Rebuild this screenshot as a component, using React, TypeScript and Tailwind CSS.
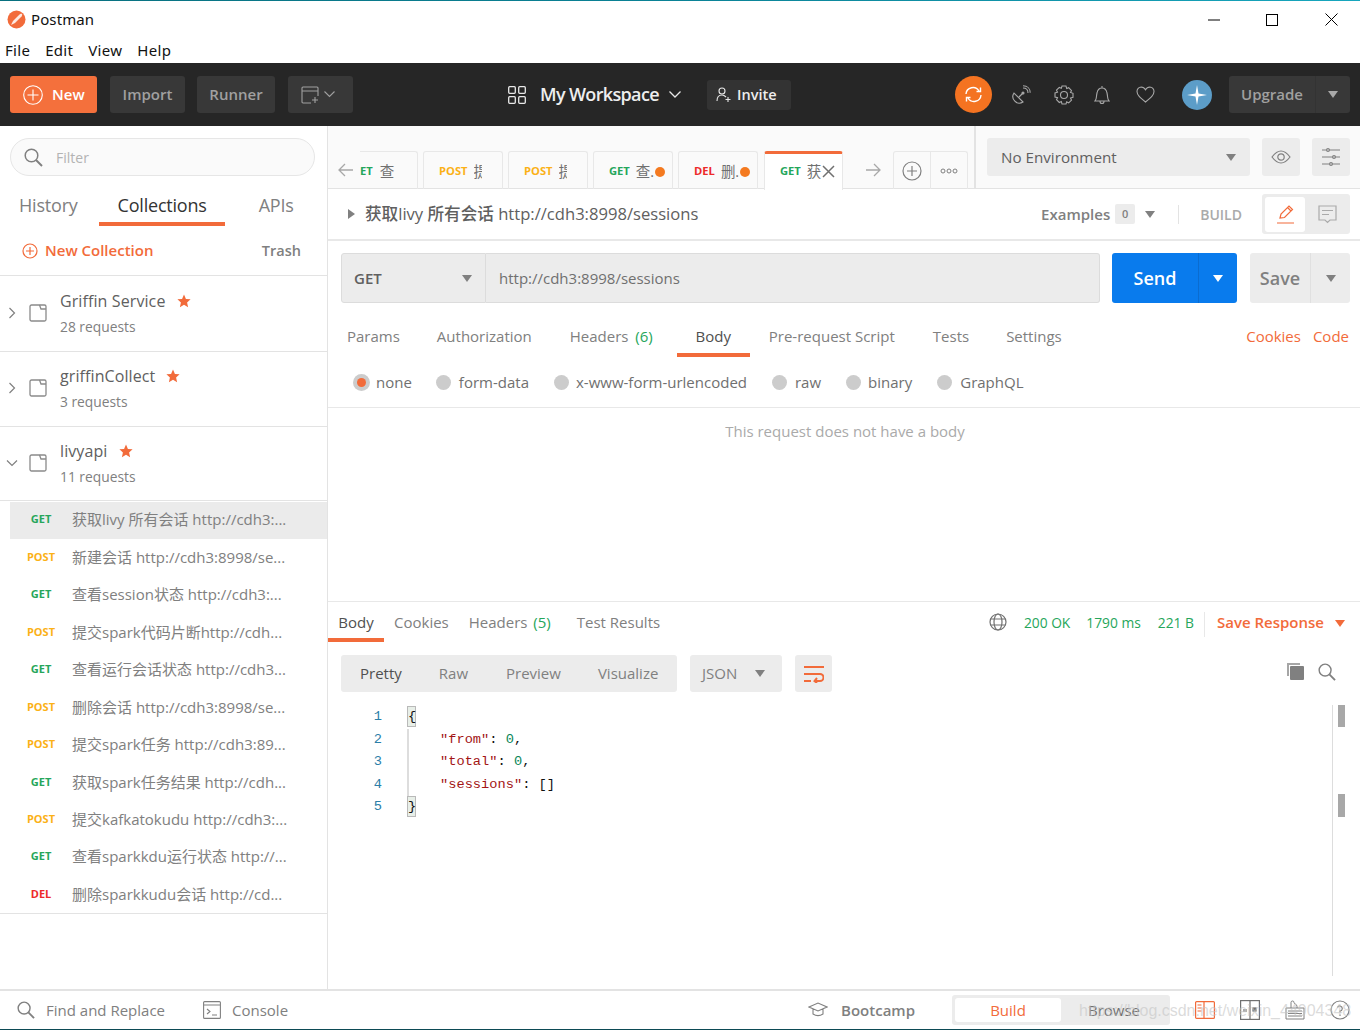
import React from "react";

const font = { fontFamily: '"Open Sans","Noto Sans CJK SC",sans-serif' };

const Tri = ({ c = "#808080", w = 10 }: { c?: string; w?: number }) => (
  <svg width={w} height={w * 0.7} viewBox="0 0 10 7" className="shrink-0"><path d="M0 0h10L5 7z" fill={c} /></svg>
);

const Folder = () => (
  <svg width="18" height="18" viewBox="0 0 18 18" fill="none" stroke="#8a8a8a" strokeWidth="1.3" className="shrink-0">
    <rect x="1" y="1" width="16" height="16" rx="1.5" />
    <path d="M10.500 1l1.500 4h5" />
  </svg>
);

const Chev = ({ down }: { down?: boolean }) => (
  <svg width="12" height="12" viewBox="0 0 12 12" fill="none" stroke="#808080" strokeWidth="1.2" className="shrink-0">
    {down ? <path d="M1 3.5l5 5 5-5" /> : <path d="M3.5 1l5 5-5 5" />}
  </svg>
);

const Star = () => (
  <svg width="14" height="14" viewBox="0 0 24 24" fill="#f26b3a" className="shrink-0">
    <path d="M12 1l3.3 7.4 8 .8-6 5.4 1.7 7.9L12 18.4l-7 4.1 1.7-7.9-6-5.4 8-.8z" />
  </svg>
);

const Search = ({ s = 19 }: { s?: number }) => (
  <svg width={s} height={s} viewBox="0 0 19 19" fill="none" stroke="#808080" strokeWidth="1.5" className="shrink-0">
    <circle cx="7.5" cy="7.5" r="6.3" /><path d="M12 12l6 6" strokeWidth="2" />
  </svg>
);

const collections = [
  { name: "Griffin Service", count: "28 requests", h: "h-[76px]", gap: "ml-[12px]", down: false, nudge: "" },
  { name: "griffinCollect", count: "3 requests", h: "h-[75px]", gap: "ml-[11px]", down: false, nudge: "mt-[-1px]" },
  { name: "livyapi", count: "11 requests", h: "h-[74px]", gap: "ml-[11px]", down: true, nudge: "" },
];

const reqs: [string, string][] = [
  ["GET", "获取livy 所有会话 http://cdh3:..."],
  ["POST", "新建会话 http://cdh3:8998/se..."],
  ["GET", "查看session状态 http://cdh3:..."],
  ["POST", "提交spark代码片断http://cdh..."],
  ["GET", "查看运行会话状态 http://cdh3..."],
  ["POST", "删除会话 http://cdh3:8998/se..."],
  ["POST", "提交spark任务 http://cdh3:89..."],
  ["GET", "获取spark任务结果 http://cdh..."],
  ["POST", "提交kafkatokudu http://cdh3:..."],
  ["GET", "查看sparkkdu运行状态 http://..."],
  ["DEL", "删除sparkkudu会话 http://cd..."],
];

const mColor = (m: string) => (m === "GET" ? "text-[#26a65b]" : m === "POST" ? "text-[#fbb117]" : "text-[#ed2a2a]");

function Sidebar() {
  return (
    <div className="w-[328px] shrink-0 border-r border-[#e3e3e3] flex flex-col bg-white">
      <div className="mt-[12px] ml-[10px] w-[305px] h-[38px] rounded-full border border-[#e6e6e6] bg-[#fafafa] flex items-center pl-[13px]">
        <Search />
        <span className="ml-[13px] text-[14px] text-[#b3b3b3]">Filter</span>
      </div>
      <div className="h-[50px] flex relative text-[18px] text-[#808080] tracking-[-0.2px]">
        <span className="ml-[19px] mt-[16px]">History</span>
        <div className="ml-[21px] w-[126px] h-[50px] border-b-4 border-[#f26b3a] text-center pt-[16px] pl-[1px] text-[#333]">Collections</div>
        <span className="ml-[34px] mt-[16px]">APIs</span>
      </div>
      <div className="h-[50px] shrink-0 flex items-center border-b border-[#e3e3e3] pl-[22px] pr-[26px]">
        <svg width="16" height="16" viewBox="0 0 16 16" fill="none" stroke="#f26b3a" strokeWidth="1.2"><circle cx="8" cy="8" r="7" /><path d="M8 4v8M4 8h8" /></svg>
        <span className="ml-[7px] text-[15px] font-semibold text-[#f26b3a]">New Collection</span>
        <span className="ml-auto text-[14.5px] font-semibold text-[#808080]">Trash</span>
      </div>
      {collections.map((c) => (
        <div key={c.name} className={`${c.h} shrink-0 flex items-center border-b border-[#e3e3e3] pl-[6px]`}>
          <span className="mb-[2px]"><Chev down={c.down} /></span>
          <span className="ml-[11px] mb-[2px]"><Folder /></span>
          <div className="ml-[13px] flex flex-col">
            <div className={`${c.nudge} flex items-center h-[24px] text-[16px] tracking-[0.1px] text-[#606060]`}>
              {c.name}
              <span className={c.gap}><Star /></span>
            </div>
            <div className="text-[13.8px] text-[#808080] mt-[4px] h-[21px]">{c.count}</div>
          </div>
        </div>
      ))}
      <div className="mt-[0.5px] border-b border-[#e3e3e3] flex flex-col">
        {reqs.map(([m, t], i) => (
          <div key={i} className={`h-[37.45px] flex items-center pb-[1px] ml-[10px] ${i === 0 ? "bg-[#ebebeb]" : ""}`}>
            <span className={`w-[62px] shrink-0 text-center text-[11px] font-bold ${mColor(m)}`}>{m}</span>
            <span className="text-[15px] text-[#808080] whitespace-nowrap">{t}</span>
          </div>
        ))}
      </div>
    </div>
  );
}

function Tab({ m, t, dot, w, active, clip }: { m: string; t: string; dot?: boolean; w: string; active?: boolean; clip?: string }) {
  return (
    <div className={`${w} shrink-0 h-full flex items-center rounded-t-[3px] border-x border-[#e8e8e8] ${active ? "bg-white border-t-[3px] border-t-[#f26b3a] pb-[1px]" : "border-t pt-[2px]"}`}>
      <span className={`text-[11.2px] font-bold ml-[15px] ${mColor(m)}`}>{m}</span>
      <span className={`${clip} ml-[6px] overflow-hidden whitespace-nowrap text-[14.5px] text-[#707070]`}>{t}</span>
      {dot && <span className="w-[10px] h-[10px] rounded-full bg-[#f47a20] shrink-0" />}
      {active && (
        <svg width="13" height="13" viewBox="0 0 13 13" stroke="#707070" strokeWidth="1.5" className="shrink-0"><path d="M1 1l11 11M12 1L1 12" /></svg>
      )}
    </div>
  );
}

function TabBar() {
  return (
    <div className="h-[63px] shrink-0 bg-[#fafafa] flex border-b border-[#e3e3e3]">
      <div className="w-[646px] shrink-0 mt-[25px] h-[38px] flex items-center relative">
        <svg width="16" height="14" viewBox="0 0 16 14" fill="none" stroke="#a8a8a8" strokeWidth="1.3" className="ml-[10px] shrink-0"><path d="M15 7H1M7 1L1 7l6 6" /></svg>
        <div className="w-[58px] shrink-0 ml-[6px] h-full flex items-center pt-[2px] border-r border-t border-[#e8e8e8] rounded-tr-[3px] overflow-hidden">
          <span className="ml-[-8px] text-[11.2px] font-bold text-[#26a65b] whitespace-nowrap">GET</span>
          <span className="ml-[7px] text-[14.5px] text-[#707070]">查</span>
        </div>
        <div className="flex h-full gap-[5px] ml-[5px]">
          <Tab w="w-[80px]" m="POST" t="提" clip="w-[8px]" />
          <Tab w="w-[80px]" m="POST" t="提" clip="w-[8px]" />
          <Tab w="w-[80px]" m="GET" t="查.." clip="w-[19px]" dot />
          <Tab w="w-[80px]" m="DEL" t="删.." clip="w-[19px]" dot />
        </div>
        <div className="ml-[6px] h-[39px] mb-[-1px] flex">
          <Tab w="w-[79px]" m="GET" t="获" clip="w-[15px]" active />
        </div>
        <svg width="16" height="14" viewBox="0 0 16 14" fill="none" stroke="#a8a8a8" strokeWidth="1.3" className="ml-[22px] shrink-0"><path d="M1 7h14M9 1l6 6-6 6" /></svg>
        <div className="ml-[12px] h-full w-[38px] shrink-0 flex items-center justify-center border-x border-t border-[#e8e8e8] rounded-tl-[3px]">
          <svg width="20" height="20" viewBox="0 0 20 20" fill="none" stroke="#808080" strokeWidth="1.2"><circle cx="10" cy="10" r="9" /><path d="M10 5v10M5 10h10" /></svg>
        </div>
        <div className="h-full w-[37px] shrink-0 flex items-center justify-center border-r border-t border-[#e8e8e8] rounded-tr-[3px]">
          <svg width="18" height="6" viewBox="0 0 18 6" fill="none" stroke="#808080" strokeWidth="1"><circle cx="3" cy="3" r="2" /><circle cx="9" cy="3" r="2" /><circle cx="15" cy="3" r="2" /></svg>
        </div>
      </div>
      <div className="w-[386px] h-[62px] border-l-2 border-[#e3e3e3] flex items-start pt-[12px] pl-[11px]">
        <div className="w-[263px] h-[38px] bg-[#ececec] rounded-[3px] flex items-center pl-[14px] pr-[14px] text-[15.2px] font-medium text-[#606060]">
          No Environment
          <span className="ml-auto"><Tri /></span>
        </div>
        <div className="ml-[12px] w-[38px] h-[38px] bg-[#ececec] rounded-[3px] flex items-center justify-center">
          <svg width="20" height="14" viewBox="0 0 20 14" fill="none" stroke="#808080" strokeWidth="1.2"><path d="M1 7c3-4 6-6 9-6s6 2 9 6c-3 4-6 6-9 6s-6-2-9-6z" /><circle cx="10" cy="7" r="3.2" /></svg>
        </div>
        <div className="ml-[12px] w-[38px] h-[38px] bg-[#ececec] rounded-[3px] flex items-center justify-center">
          <svg width="18" height="18" viewBox="0 0 18 18" fill="none" stroke="#808080" strokeWidth="1.2"><path d="M0 2h18M0 9h18M0 16h18" /><circle cx="6" cy="2" r="1.4" fill="#ececec" /><circle cx="12" cy="9" r="1.4" fill="#ececec" /><circle cx="9" cy="16" r="1.4" fill="#ececec" /></svg>
        </div>
      </div>
    </div>
  );
}

function TitleRow() {
  return (
    <div className="h-[52px] shrink-0 flex items-center border-b-2 border-[#e8e8e8] pl-[20px] pr-[10px]">
      <svg width="7" height="10" viewBox="0 0 7 10" className="shrink-0"><path d="M0 0l7 5-7 5z" fill="#808080" /></svg>
      <span className="ml-[10px] text-[16.6px] font-medium text-[#606060]">获取livy 所有会话 http://cdh3:8998/sessions</span>
      <span className="ml-auto text-[15px] font-semibold text-[#808080]">Examples</span>
      <span className="ml-[5px] w-[20px] h-[20px] bg-[#ececec] rounded-[2px] text-[11px] font-semibold text-[#808080] flex items-center justify-center">0</span>
      <span className="ml-[10px]"><Tri /></span>
      <span className="ml-[23px] w-px h-[19px] bg-[#e3e3e3]" />
      <span className="ml-[21px] text-[14px] font-semibold text-[#aaa]">BUILD</span>
      <div className="ml-[20px] w-[88px] h-[40px] bg-[#ececec] rounded-[3px] flex items-center pl-[3px]">
        <div className="w-[40px] h-[35px] bg-white rounded-[3px] flex items-center justify-center">
          <svg width="19" height="19" viewBox="0 0 19 19" fill="none" stroke="#f26b3a" strokeWidth="1.2"><path d="M4 13l1-4L13 1l3.5 3.5-8 8zM11.5 2.5L15 6M1 18h17" /></svg>
        </div>
        <div className="w-[45px] flex justify-center">
          <svg width="19" height="19" viewBox="0 0 19 19" fill="none" stroke="#aaa" strokeWidth="1.2"><path d="M1 1h17v14h-6l-2.5 2.5L7 15H1zM4 5.500h11M4 9.500h7" /></svg>
        </div>
      </div>
    </div>
  );
}

function UrlRow() {
  return (
    <div className="mt-[12px] h-[50px] shrink-0 flex pl-[13px]">
      <div className="w-[145px] bg-[#ececec] border border-[#dcdcdc] rounded-l-[3px] flex items-center pl-[12px] pr-[13px] text-[15px] font-semibold text-[#606060]">
        GET
        <span className="ml-auto"><Tri /></span>
      </div>
      <div className="w-[614px] bg-[#ececec] border border-l-0 border-[#dcdcdc] rounded-r-[3px] flex items-center pl-[13px] text-[15px] text-[#707070]">
        http://cdh3:8998/sessions
      </div>
      <div className="ml-[12px] w-[125px] bg-[#097bed] rounded-[3px] flex text-white text-[18px] font-semibold">
        <span className="w-[87px] flex items-center justify-center border-r border-[#0a6cd0]">Send</span>
        <span className="flex-1 flex items-center justify-center"><Tri c="#fff" /></span>
      </div>
      <div className="ml-[13px] w-[100px] bg-[#ececec] rounded-[3px] flex text-[#808080] text-[18px] font-semibold">
        <span className="w-[61px] flex items-center justify-center border-r border-[#e0e0e0]">Save</span>
        <span className="flex-1 flex items-center justify-center"><Tri /></span>
      </div>
    </div>
  );
}

function ReqTabs() {
  return (
    <div className="h-[54px] shrink-0 flex items-start text-[15px] text-[#808080] pl-[19px] pr-[11px] whitespace-nowrap">
      <span className="mt-[22px]">Params</span>
      <span className="mt-[22px] ml-[37px]">Authorization</span>
      <span className="mt-[22px] ml-[38px]">Headers <span className="ml-[3px] text-[#26a65b]">(6)</span></span>
      <div className="ml-[24px] mt-[17px] w-[73px] h-[37px] border-b-4 border-[#f26b3a] text-center pt-[5px] text-[#505050]">Body</div>
      <span className="mt-[22px] ml-[19px]">Pre-request Script</span>
      <span className="mt-[22px] ml-[38px]">Tests</span>
      <span className="mt-[22px] ml-[37px]">Settings</span>
      <span className="mt-[22px] ml-auto text-[#f26b3a]">Cookies</span>
      <span className="mt-[22px] ml-[12px] text-[#f26b3a]">Code</span>
    </div>
  );
}

function Radios() {
  const items: [string, string, string][] = [
    ["form-data", "ml-[24px]", "ml-[8px]"],
    ["x-www-form-urlencoded", "ml-[25px]", "ml-[7px]"],
    ["raw", "ml-[25px]", "ml-[8px]"],
    ["binary", "ml-[25px]", "ml-[7px]"],
    ["GraphQL", "ml-[25px]", "ml-[8px]"],
  ];
  return (
    <div className="h-[51px] shrink-0 flex items-center border-b border-[#e8e8e8] pl-[25px] text-[15px] text-[#707070] whitespace-nowrap">
      <span className="w-[17px] h-[17px] rounded-full bg-[#ccc] flex items-center justify-center">
        <span className="w-[9px] h-[9px] rounded-full bg-[#f26b3a]" />
      </span>
      <span className="ml-[6px]">none</span>
      {items.map(([t, m, g]) => (
        <React.Fragment key={t}>
          <span className={`${m} w-[15px] h-[15px] rounded-full bg-[#ccc]`} />
          <span className={g}>{t}</span>
        </React.Fragment>
      ))}
    </div>
  );
}

function Response() {
  return (
    <div className="flex-1 flex flex-col border-t border-[#e8e8e8] min-h-0">
      <div className="h-[40px] shrink-0 flex items-start text-[15px] text-[#808080] pr-[15px] whitespace-nowrap">
        <div className="w-[56px] h-[40px] border-b-4 border-[#f26b3a] text-center pt-[9px] text-[#505050]">Body</div>
        <span className="ml-[10px] mt-[9px]">Cookies</span>
        <span className="ml-[20px] mt-[9px]">Headers <span className="ml-[2px] text-[#26a65b]">(5)</span></span>
        <span className="ml-[26px] mt-[9px]">Test Results</span>
        <svg width="18" height="18" viewBox="0 0 18 18" fill="none" stroke="#707070" strokeWidth="1.2" className="ml-auto mt-[11px]"><circle cx="9" cy="9" r="8" /><ellipse cx="9" cy="9" rx="4" ry="8" /><path d="M1.500 6h15M1.500 12h15" /></svg>
        <span className="ml-[17px] mt-[11px] text-[13.8px] text-[#26a65b]">200 OK</span>
        <span className="ml-[16px] mt-[11px] text-[13.8px] text-[#26a65b]">1790 ms</span>
        <span className="ml-[17px] mt-[11px] text-[13.8px] text-[#26a65b]">221 B</span>
        <span className="ml-[10px] mt-[10px] w-px h-[25px] bg-[#e8e8e8]" />
        <span className="ml-[12px] mt-[9px] text-[#f26b3a] font-semibold">Save Response</span>
        <span className="ml-[11px] mt-[18px]"><Tri c="#f26b3a" /></span>
      </div>
      <div className="mt-[13px] h-[37px] flex items-center pl-[13px] pr-[24px] text-[15px] text-[#808080] shrink-0">
        <div className="w-[336px] h-full bg-[#ececec] rounded-[3px] flex items-center">
          <span className="ml-[19px] text-[#505050]">Pretty</span>
          <span className="ml-[37px]">Raw</span>
          <span className="ml-[38px]">Preview</span>
          <span className="ml-[37px]">Visualize</span>
        </div>
        <div className="ml-[13px] w-[92px] h-full bg-[#ececec] rounded-[3px] flex items-center pl-[12px] pr-[17px]">
          JSON
          <span className="ml-auto"><Tri /></span>
        </div>
        <div className="ml-[13px] w-[37px] h-full bg-[#ececec] rounded-[3px] flex items-center justify-center">
          <svg width="20" height="18" viewBox="0 0 20 18" fill="none" stroke="#f26b3a" strokeWidth="2"><path d="M0 2h20M0 9h16a3.500 3.500 0 0 1 0 7h-5M13 13l-2.500 3 2.500 2M0 16h7" /></svg>
        </div>
        <svg width="19" height="19" viewBox="0 0 19 19" className="ml-auto mb-[4px] shrink-0" fill="#808080"><path d="M1 1h13v2H3v11H1z" opacity=".7" /><rect x="4" y="4" width="14" height="14" rx="1" /></svg>
        <span className="ml-[13px] mb-[4px]"><Search s={18} /></span>
      </div>
      <div className="mt-[14px] flex-1 flex min-h-0 relative">
        <div className="w-[54px] shrink-0 text-right text-[13.7px] text-[#2b7ea8] leading-[22.5px] pt-0" style={{ fontFamily: '"Liberation Mono",monospace' }}>
          {[1, 2, 3, 4, 5].map((n) => <div key={n}>{n}</div>)}
        </div>
        <div className="ml-[25px] text-[13.7px] leading-[22.5px] whitespace-pre text-[#111] relative" style={{ fontFamily: '"Liberation Mono",monospace' }}>
          <div><span className="inline-block w-[9px] h-[21px] leading-[20px] bg-[#e8efe8] border border-[#b9b9b9]">{"{"}</span></div>
          <div className="border-l-2 border-[#ddd] pl-[31px]"><span className="text-[#a31515]">"from"</span>: <span className="text-[#098658]">0</span>,</div>
          <div className="border-l-2 border-[#ddd] pl-[31px]"><span className="text-[#a31515]">"total"</span>: <span className="text-[#098658]">0</span>,</div>
          <div className="border-l-2 border-[#ddd] pl-[31px]"><span className="text-[#a31515]">"sessions"</span>: []</div>
          <div><span className="inline-block w-[9px] h-[21px] leading-[20px] bg-[#e8efe8] border border-[#b9b9b9]">{"}"}</span></div>
        </div>
        <div className="ml-auto mr-[15px] w-[13px] mt-[-1px] mb-[13px] border-l border-[#ddd] flex flex-col items-end">
          <div className="w-[7px] h-[22px] bg-[#a8a8a8] shrink-0" />
          <div className="w-[7px] h-[23px] bg-[#a8a8a8] mt-[67px] shrink-0" />
        </div>
      </div>
    </div>
  );
}

function BottomBar() {
  return (
    <div className="h-[41px] shrink-0 border-t-2 border-[#e3e3e3] border-b border-b-[#0c4a55] flex items-center pl-[17px] pr-[10px] text-[15px] text-[#808080] relative whitespace-nowrap">
      <Search s={18} />
      <span className="ml-[11px]">Find and Replace</span>
      <svg width="18" height="18" viewBox="0 0 18 18" fill="none" stroke="#808080" strokeWidth="1.1" className="ml-[38px] shrink-0"><rect x=".6" y=".6" width="16.800" height="16.800" rx="1" /><path d="M1 4h16M4 8l3 2.500-3 2.500M9 14h5" /></svg>
      <span className="ml-[11px]">Console</span>
      <svg width="20" height="16" viewBox="0 0 20 16" fill="none" stroke="#808080" strokeWidth="1.1" className="ml-[520px] shrink-0"><path d="M1 5l9-4 9 4-9 4zM5 7v5c3 2 7 2 10 0V7" /></svg>
      <span className="ml-[13px] font-semibold">Bootcamp</span>
      <div className="ml-[37px] w-[218px] h-[30px] shrink-0 bg-[#ececec] rounded-[3px] flex items-center pl-[3px]">
        <div className="w-[106px] h-[24px] bg-white rounded-[3px] flex items-center justify-center text-[#f26b3a]">Build</div>
        <span className="ml-[27px] text-[#707070]">Browse</span>
      </div>
      <svg width="20" height="18" viewBox="0 0 20 18" fill="none" stroke="#f26b3a" strokeWidth="1.2" className="ml-[25px] shrink-0"><rect x=".6" y=".6" width="18.800" height="16.800" rx="1" /><path d="M9 1v16M2.500 4h4M2.500 7h4M2.500 10h4" /></svg>
      <svg width="20" height="20" viewBox="0 0 20 20" fill="none" stroke="#707070" strokeWidth="1.2" className="ml-[25px] shrink-0"><rect x=".6" y=".6" width="18.800" height="18.800" /><path d="M10 1v18M4 9v3M6 9v3" /><rect x="13" y="8" width="3" height="3" fill="#707070" /></svg>
      <svg width="20" height="20" viewBox="0 0 20 20" fill="none" stroke="#808080" strokeWidth="1" className="ml-[25px] shrink-0"><path d="M6 8V2.500a1.500 1.500 0 0 1 3 0c0 2 3 1 3 4V8M1 8h18v11H1zM3 11h14M3 13.500h14M3 16h14" /></svg>
      <svg width="20" height="20" viewBox="0 0 20 20" fill="none" stroke="#808080" strokeWidth="1.2" className="ml-[25px] shrink-0"><circle cx="10" cy="10" r="9" /><path d="M7.500 7.500A2.500 2.500 0 1 1 10 11v1.500M10 14.500v1.500" /></svg>
      <span className="absolute left-[1079px] top-[8px] text-[16px] whitespace-nowrap text-[#c4c4c4]/60" style={{ fontFamily: '"Liberation Sans",sans-serif' }}>https://blog.csdn.net/weixin_44904348</span>
    </div>
  );
}

export default function App() {
  return (
    <div className="w-[1360px] h-[1030px] flex flex-col bg-white overflow-hidden" style={font}>
      <div className="h-[1px] shrink-0 bg-gradient-to-r from-[#08707f] via-[#0a8296] to-[#17a6bd]" />
      <div className="h-[37px] shrink-0 flex items-center pl-[7px] pr-[22px] text-[#111]" style={{ fontFamily: '"Noto Sans",sans-serif' }}>
        <svg width="19" height="19" viewBox="0 0 19 19" className="shrink-0">
          <circle cx="9.500" cy="9.500" r="9" fill="#f26b3a" />
          <path d="M4 15l2-4 6-6c1-1 2.500-1.500 3-1s0 2-1 3l-6 6z" fill="#fff" opacity=".85" />
        </svg>
        <span className="ml-[5px] text-[15px] tracking-[0.1px]">Postman</span>
        <svg width="12" height="2" viewBox="0 0 12 2" className="ml-auto"><path d="M0 1h12" stroke="#000" /></svg>
        <svg width="12" height="12" viewBox="0 0 12 12" fill="none" stroke="#000" className="ml-[46px]"><rect x=".5" y=".5" width="11" height="11" /></svg>
        <svg width="13" height="13" viewBox="0 0 13 13" stroke="#000" className="ml-[47px]"><path d="M.5.5l12 12M12.500.5l-12 12" /></svg>
      </div>
      <div className="h-[25px] shrink-0 flex items-center pl-[5px] text-[15px] tracking-[0.3px] text-[#111] gap-[15px]" style={{ fontFamily: '"Noto Sans",sans-serif' }}>
        <span>File</span><span>Edit</span><span>View</span><span>Help</span>
      </div>
      <div className="h-[63px] shrink-0 bg-[#262626] flex items-center pl-[10px] pr-[10px] text-[15px] font-semibold text-[#a0a0a0] whitespace-nowrap">
        <div className="w-[87px] shrink-0 h-[37px] bg-[#f4703c] rounded-[3px] flex items-center pl-[13px] text-white">
          <svg width="20" height="20" viewBox="0 0 20 20" fill="none" stroke="#fff" strokeWidth="1.1"><circle cx="10" cy="10" r="9.300" /><path d="M10 4.500v11M4.500 10h11" /></svg>
          <span className="ml-[9px]">New</span>
        </div>
        <div className="ml-[13px] w-[75px] shrink-0 h-[37px] bg-[#383838] rounded-[3px] flex items-center justify-center">Import</div>
        <div className="ml-[12px] w-[78px] shrink-0 h-[37px] bg-[#383838] rounded-[3px] flex items-center justify-center">Runner</div>
        <div className="ml-[13px] w-[65px] shrink-0 h-[37px] bg-[#383838] rounded-[3px] flex items-center pl-[13px]">
          <svg width="19" height="18" viewBox="0 0 19 18" fill="none" stroke="#a0a0a0" strokeWidth="1.1"><path d="M10 17H2a1 1 0 0 1-1-1V2a1 1 0 0 1 1-1h14a1 1 0 0 1 1 1v8M1 5h16M14 11v6M11 14h6" /></svg>
          <svg width="11" height="7" viewBox="0 0 11 7" fill="none" stroke="#a0a0a0" strokeWidth="1.100" className="ml-[4px]"><path d="M.5.500l5 5 5-5" /></svg>
        </div>
        <svg width="18" height="18" viewBox="0 0 18 18" fill="none" stroke="#e8e8e8" strokeWidth="1.3" className="ml-[155px] shrink-0"><rect x=".7" y=".7" width="6.600" height="6.600" rx="1" /><rect x="10.700" y=".7" width="6.600" height="6.600" rx="1" /><rect x=".7" y="10.700" width="6.600" height="6.600" rx="1" /><rect x="10.700" y="10.700" width="6.600" height="6.600" rx="1" /></svg>
        <span className="ml-[14px] w-[119px] shrink-0 text-[18px] text-[#eee] tracking-[-0.65px]">My Workspace</span>
        <svg width="12" height="7" viewBox="0 0 12 7" fill="none" stroke="#e8e8e8" strokeWidth="1.3" className="ml-[10px] shrink-0"><path d="M.5.500l5.500 5.500 5.500-5.500" /></svg>
        <div className="ml-[26px] w-[84px] shrink-0 h-[30px] bg-[#333] rounded-[3px] flex items-center pl-[9px] text-[#eee] text-[14.5px]">
          <svg width="15" height="15" viewBox="0 0 15 15" fill="none" stroke="#e8e8e8" strokeWidth="1.1"><circle cx="6" cy="4" r="3" /><path d="M1 14c0-4 2-6 5-6 2 0 3 1 4 2M12 10v5M9.500 12.500h5" /></svg>
          <span className="ml-[6px]">Invite</span>
        </div>
        <div className="ml-[164px] w-[37px] h-[37px] rounded-full bg-[#f47321] flex items-center justify-center shrink-0">
          <svg width="19" height="17" viewBox="0 0 19 17" fill="none" stroke="#fff" strokeWidth="1.4"><path d="M2 8a7 7 0 0 1 13-3M17 9a7 7 0 0 1-13 3" /><path d="M16.500 1.500v4h-4M2.500 15.500v-4h4" /></svg>
        </div>
        <svg width="20" height="20" viewBox="0 0 20 20" fill="none" stroke="#a8a8a8" strokeWidth="1.1" className="ml-[19px] shrink-0"><path d="M3 8a6.500 6.500 0 0 0 9 9zM8 12l4-4M12 3c3 0 5 2 5 5M12 .8c4.500 0 7.200 3 7.200 7" /><circle cx="12" cy="8" r="1" fill="#a8a8a8" /></svg>
        <svg width="20" height="20" viewBox="0 0 20 20" fill="none" stroke="#a8a8a8" strokeWidth="1.1" className="ml-[23px] shrink-0"><path d="M8 1h4l.7 2.600 2-.9 2.800 2.800-1 2 2.500.8v4l-2.500.8 1 2-2.800 2.800-2-1L12 19H8l-.7-2.500-2 1-2.800-2.800 1-2L1 12V8l2.500-.8-1-2 2.800-2.800 2 .9z" /><circle cx="10" cy="10" r="3.500" /></svg>
        <svg width="16" height="20" viewBox="0 0 16 20" fill="none" stroke="#a8a8a8" strokeWidth="1.1" className="ml-[20px] shrink-0"><path d="M1 16c2-2 1-4 2-8 .6-3 2.500-5 5-5s4.400 2 5 5c1 4 0 6 2 8zM8 3V1M6 16.500a2 2 0 0 0 4 0" /></svg>
        <svg width="19" height="17" viewBox="0 0 19 17" fill="none" stroke="#a8a8a8" strokeWidth="1.1" className="ml-[26px] shrink-0"><path d="M9.500 16C4 11.500 1 9 1 5.500A4.300 4.300 0 0 1 5.200 1c1.900 0 3.300 1 4.300 2.800C10.500 2 11.900 1 13.800 1A4.300 4.300 0 0 1 18 5.500C18 9 15 11.500 9.500 16z" /></svg>
        <div className="ml-[27px] w-[30px] h-[30px] rounded-full bg-[#5c9dc8] flex items-center justify-center shrink-0">
          <svg width="20" height="20" viewBox="0 0 20 20"><path d="M10 0l1.500 8.500L20 10l-8.500 1.500L10 20l-1.500-8.500L0 10l8.500-1.500z" fill="#fff" /></svg>
        </div>
        <div className="ml-[17px] w-[121px] h-[37px] bg-[#383838] rounded-[3px] flex shrink-0 text-[15px]">
          <span className="w-[87px] flex items-center justify-center border-r border-[#333]">Upgrade</span>
          <span className="flex-1 flex items-center justify-center"><Tri c="#a8a8a8" /></span>
        </div>
      </div>
      <div className="flex-1 flex min-h-0">
        <Sidebar />
        <div className="flex-1 flex flex-col min-w-0">
          <TabBar />
          <TitleRow />
          <UrlRow />
          <ReqTabs />
          <Radios />
          <div className="h-[193px] shrink-0 text-center text-[15px] text-[#aaa] pt-[12px] pl-[2px]">This request does not have a body</div>
          <Response />
        </div>
      </div>
      <BottomBar />
    </div>
  );
}
